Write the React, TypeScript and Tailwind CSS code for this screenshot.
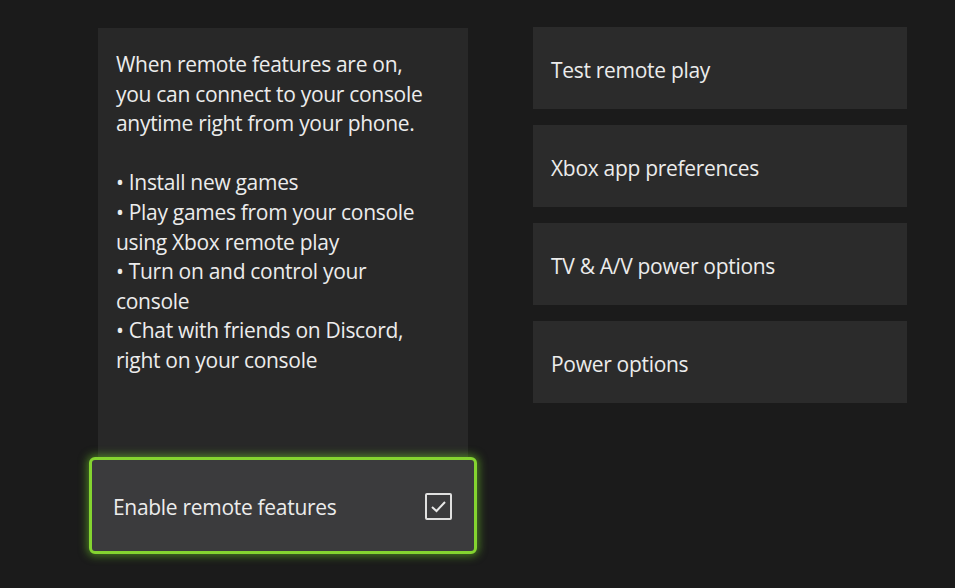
const tiles = ["Test remote play", "Xbox app preferences", "TV & A/V power options", "Power options"];

const lines = [
  "When remote features are on,",
  "you can connect to your console",
  "anytime right from your phone.",
  "",
  "• Install new games",
  "• Play games from your console",
  "using Xbox remote play",
  "• Turn on and control your",
  "console",
  "• Chat with friends on Discord,",
  "right on your console",
];

export default function App() {
  return (
    <div
      className="w-[955px] h-[588px] bg-[#1b1b1b] text-[#ececec] overflow-hidden flex gap-[65px] pl-[98px] pt-[28px]"
      style={{ fontFamily: '"Open Sans", "Noto Sans", sans-serif' }}
    >
      <div className="w-[370px] h-[526px] flex flex-col">
        <div className="flex-1 bg-[#282828] px-[18px] pt-[22px] text-[21px] leading-[29.6px] tracking-[-0.3px]">
          {lines.map((l, i) => (
            <div key={i} className="h-[29.6px] whitespace-nowrap">{l}</div>
          ))}
        </div>
        <div className="-mx-[9px] h-[97px] rounded-[6px] border-[3px] border-[#84d430] bg-[#3b3b3d] shadow-[0_0_8px_2px_rgba(110,200,40,0.55)] flex items-center justify-between pl-[21px] pr-[22px]">
          <span className="text-[21px] tracking-[-0.3px] pt-[4px]">Enable remote features</span>
          <div className="w-[27px] h-[27px] mt-[2px] border-2 border-[#e0e0e0] rounded-[2px] flex items-center justify-center">
            <svg width="17" height="13" viewBox="0 0 17 13" fill="none">
              <path d="M2 7 L6.5 11 L15 2" stroke="#e8e8e8" strokeWidth="2" />
            </svg>
          </div>
        </div>
      </div>
      <div className="w-[374px] flex flex-col gap-[16px] -mt-[1px]">
        {tiles.map((t) => (
          <div key={t} className="h-[82px] bg-[#2b2b2b] flex items-center px-[18px] pt-[5px] text-[21px] tracking-[-0.3px]">
            {t}
          </div>
        ))}
      </div>
    </div>
  );
}
